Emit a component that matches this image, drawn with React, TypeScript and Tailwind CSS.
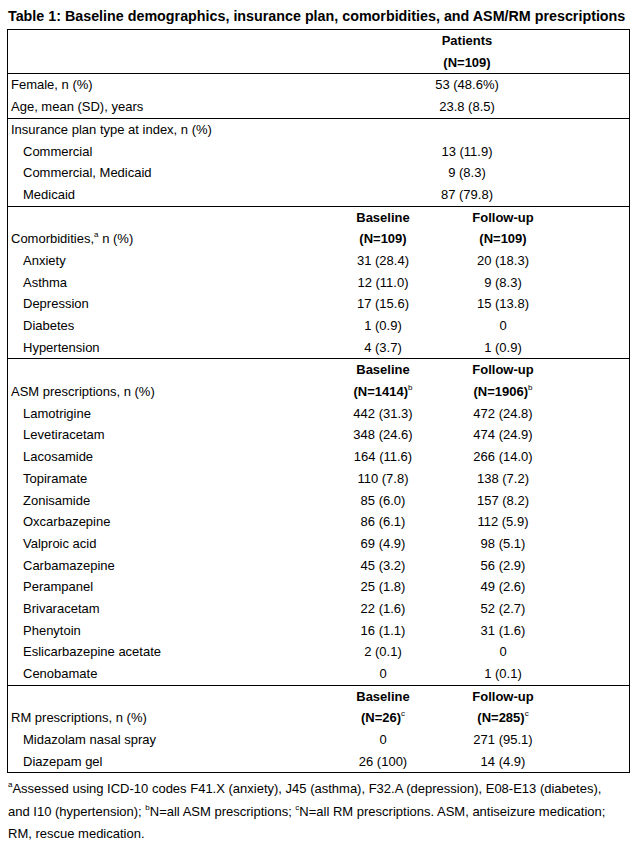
import React from 'react';

type Row = { label: React.ReactNode; indent?: boolean; a?: string; b?: string; bold?: boolean };

const Sup = ({ children }: { children: React.ReactNode }) => (
  <sup className="text-[8px] font-normal relative -top-[1px] align-super">{children}</sup>
);

const TwoCol = ({ rows }: { rows: Row[] }) => (
  <div className="border-t border-black first:border-t-0">
    {rows.map((r, i) => (
      <div key={i} className="grid grid-cols-[399px_120px_1fr] h-[21.7px] items-center">
        <div className={r.indent ? 'pl-[15px]' : 'pl-[3px]'}>{r.label}</div>
        <div className={`text-center ${r.bold ? 'font-bold' : ''}`}>{r.a}</div>
        <div />
      </div>
    ))}
  </div>
);

const ThreeCol = ({ title, nA, nB, sup, rows }: { title: React.ReactNode; nA: string; nB: string; sup?: string; rows: Row[] }) => (
  <div className="border-t border-black">
    <div className="grid grid-cols-[315px_120px_120px_1fr] h-[21.7px] items-center font-bold">
      <div />
      <div className="text-center">Baseline</div>
      <div className="text-center">Follow-up</div>
      <div />
    </div>
    <div className="grid grid-cols-[315px_120px_120px_1fr] h-[21.7px] items-center">
      <div className="pl-[3px]">{title}</div>
      <div className="text-center font-bold">
        {nA}
        {sup && <Sup>{sup}</Sup>}
      </div>
      <div className="text-center font-bold">
        {nB}
        {sup && <Sup>{sup}</Sup>}
      </div>
      <div />
    </div>
    {rows.map((r, i) => (
      <div key={i} className="grid grid-cols-[315px_120px_120px_1fr] h-[21.7px] items-center">
        <div className="pl-[15px]">{r.label}</div>
        <div className="text-center">{r.a}</div>
        <div className="text-center">{r.b}</div>
        <div />
      </div>
    ))}
  </div>
);

const comorbidities: Row[] = [
  { label: 'Anxiety', a: '31 (28.4)', b: '20 (18.3)' },
  { label: 'Asthma', a: '12 (11.0)', b: '9 (8.3)' },
  { label: 'Depression', a: '17 (15.6)', b: '15 (13.8)' },
  { label: 'Diabetes', a: '1 (0.9)', b: '0' },
  { label: 'Hypertension', a: '4 (3.7)', b: '1 (0.9)' },
];

const asm: Row[] = [
  { label: 'Lamotrigine', a: '442 (31.3)', b: '472 (24.8)' },
  { label: 'Levetiracetam', a: '348 (24.6)', b: '474 (24.9)' },
  { label: 'Lacosamide', a: '164 (11.6)', b: '266 (14.0)' },
  { label: 'Topiramate', a: '110 (7.8)', b: '138 (7.2)' },
  { label: 'Zonisamide', a: '85 (6.0)', b: '157 (8.2)' },
  { label: 'Oxcarbazepine', a: '86 (6.1)', b: '112 (5.9)' },
  { label: 'Valproic acid', a: '69 (4.9)', b: '98 (5.1)' },
  { label: 'Carbamazepine', a: '45 (3.2)', b: '56 (2.9)' },
  { label: 'Perampanel', a: '25 (1.8)', b: '49 (2.6)' },
  { label: 'Brivaracetam', a: '22 (1.6)', b: '52 (2.7)' },
  { label: 'Phenytoin', a: '16 (1.1)', b: '31 (1.6)' },
  { label: 'Eslicarbazepine acetate', a: '2 (0.1)', b: '0' },
  { label: 'Cenobamate', a: '0', b: '1 (0.1)' },
];

const rm: Row[] = [
  { label: 'Midazolam nasal spray', a: '0', b: '271 (95.1)' },
  { label: 'Diazepam gel', a: '26 (100)', b: '14 (4.9)' },
];

export default function App() {
  return (
    <div className="w-[636px] h-[841px] bg-white text-black font-['Liberation_Sans',Arial,sans-serif] text-[13px] overflow-hidden">
      <h1 className="pl-[8px] pt-[8px] h-[29px] text-[14.3px] font-bold leading-[17px] whitespace-nowrap">
        Table 1: Baseline demographics, insurance plan, comorbidities, and ASM/RM prescriptions
      </h1>
      <div className="ml-[7px] w-[623px] border border-black">
        <TwoCol
          rows={[
            { label: '', a: 'Patients', bold: true },
            { label: '', a: '(N=109)', bold: true },
          ]}
        />
        <TwoCol
          rows={[
            { label: 'Female, n (%)', a: '53 (48.6%)' },
            { label: 'Age, mean (SD), years', a: '23.8 (8.5)' },
          ]}
        />
        <TwoCol
          rows={[
            { label: 'Insurance plan type at index, n (%)' },
            { label: 'Commercial', indent: true, a: '13 (11.9)' },
            { label: 'Commercial, Medicaid', indent: true, a: '9 (8.3)' },
            { label: 'Medicaid', indent: true, a: '87 (79.8)' },
          ]}
        />
        <ThreeCol
          title={
            <>
              Comorbidities,<Sup>a</Sup> n (%)
            </>
          }
          nA="(N=109)"
          nB="(N=109)"
          rows={comorbidities}
        />
        <ThreeCol title="ASM prescriptions, n (%)" nA="(N=1414)" nB="(N=1906)" sup="b" rows={asm} />
        <ThreeCol title="RM prescriptions, n (%)" nA="(N=26)" nB="(N=285)" sup="c" rows={rm} />
      </div>
      <p className="pl-[8px] pt-[5px] leading-[22.5px] whitespace-nowrap">
        <Sup>a</Sup>Assessed using ICD-10 codes F41.X (anxiety), J45 (asthma), F32.A (depression), E08-E13 (diabetes),
        <br />
        and I10 (hypertension); <Sup>b</Sup>N=all ASM prescriptions; <Sup>c</Sup>N=all RM prescriptions. ASM, antiseizure medication;
        <br />
        RM, rescue medication.
      </p>
    </div>
  );
}
